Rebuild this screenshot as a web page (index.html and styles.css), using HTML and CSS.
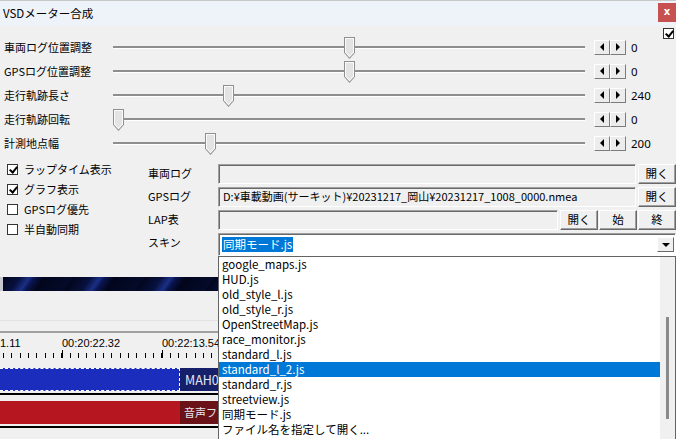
FILE: index.html
```html
<!DOCTYPE html>
<html lang="ja">
<head>
<meta charset="utf-8">
<link rel="stylesheet" href="styles.css">
</head>
<body>
<div class="window">
  <div class="titlebar">
    <span class="title">VSDメーター合成</span>
    <div class="close">x</div>
  </div>
  <div class="client">
    <div class="toprow"><span class="cb small checked"></span></div>

    <div class="sliders">
      <div class="srow">
        <span class="slabel">車両ログ位置調整</span>
        <div class="track"><span class="thumb" style="left:231px"></span></div>
        <div class="spin"><span class="sbtn"><i class="tl"></i></span><span class="sbtn"><i class="tr"></i></span></div>
        <span class="sval">0</span>
      </div>
      <div class="srow">
        <span class="slabel">GPSログ位置調整</span>
        <div class="track"><span class="thumb" style="left:231px"></span></div>
        <div class="spin"><span class="sbtn"><i class="tl"></i></span><span class="sbtn"><i class="tr"></i></span></div>
        <span class="sval">0</span>
      </div>
      <div class="srow">
        <span class="slabel">走行軌跡長さ</span>
        <div class="track"><span class="thumb" style="left:110px"></span></div>
        <div class="spin"><span class="sbtn"><i class="tl"></i></span><span class="sbtn"><i class="tr"></i></span></div>
        <span class="sval">240</span>
      </div>
      <div class="srow">
        <span class="slabel">走行軌跡回転</span>
        <div class="track"><span class="thumb" style="left:0px"></span></div>
        <div class="spin"><span class="sbtn"><i class="tl"></i></span><span class="sbtn"><i class="tr"></i></span></div>
        <span class="sval">0</span>
      </div>
      <div class="srow">
        <span class="slabel">計測地点幅</span>
        <div class="track"><span class="thumb" style="left:92px"></span></div>
        <div class="spin"><span class="sbtn"><i class="tl"></i></span><span class="sbtn"><i class="tr"></i></span></div>
        <span class="sval">200</span>
      </div>
    </div>

    <div class="options">
      <div class="checks">
        <label class="crow"><span class="cb checked"></span><span>ラップタイム表示</span></label>
        <label class="crow"><span class="cb checked"></span><span>グラフ表示</span></label>
        <label class="crow"><span class="cb"></span><span>GPSログ優先</span></label>
        <label class="crow"><span class="cb"></span><span>半自動同期</span></label>
      </div>
      <div class="files">
        <div class="frow">
          <span class="flabel">車両ログ</span>
          <div class="field"></div>
          <span class="btn">開く</span>
        </div>
        <div class="frow">
          <span class="flabel">GPSログ</span>
          <div class="field">D:¥車載動画(サーキット)¥20231217_岡山¥20231217_1008_0000.nmea</div>
          <span class="btn">開く</span>
        </div>
        <div class="frow">
          <span class="flabel">LAP表</span>
          <div class="field"></div>
          <span class="btn">開く</span>
          <span class="btn">始</span>
          <span class="btn">終</span>
        </div>
        <div class="frow skin">
          <span class="flabel">スキン</span>
          <div class="combo">
            <span class="sel">同期モード.js</span>
            <span class="arrow"><i></i></span>
          </div>
        </div>
      </div>
    </div>

    <div class="lower">
      <div class="band"></div>
      <div class="sep1"></div>
      <div class="sep2"></div>
      <div class="timeline">
        <span class="tlabel" style="left:0px">1.11</span>
        <span class="tlabel" style="left:62px">00:20:22.32</span>
        <span class="tlabel" style="left:162px">00:22:13.54</span>
        <div class="ticks"></div>
      </div>
      <div class="trackbar video">
        <div class="clip"></div>
        <div class="clipname">MAH0</div>
        <div class="rest"></div>
      </div>
      <div class="blackline"></div>
      <div class="trackbar audio">
        <div class="clip"></div>
        <div class="clipname">音声フ</div>
        <div class="rest"></div>
      </div>
      <div class="blackline"></div>
    </div>
  </div>

  <div class="dropdown">
    <ul class="items">
      <li>google_maps.js</li>
      <li>HUD.js</li>
      <li>old_style_l.js</li>
      <li>old_style_r.js</li>
      <li>OpenStreetMap.js</li>
      <li>race_monitor.js</li>
      <li>standard_l.js</li>
      <li class="hl">standard_l_2.js</li>
      <li>standard_r.js</li>
      <li>streetview.js</li>
      <li>同期モード.js</li>
      <li>ファイル名を指定して開く...</li>
    </ul>
    <div class="vscroll"><span class="vthumb"></span></div>
  </div>
</div>
</body>
</html>
```

FILE: styles.css
```css
* { box-sizing: border-box; }
html, body { margin: 0; padding: 0; }
body {
  width: 676px;
  height: 439px;
  overflow: hidden;
  background: #f0f0f0;
  font-family: "Noto Sans CJK JP", "Noto Sans", sans-serif;
  font-size: 11px;
  color: #000;
}
.window {
  position: relative;
  width: 676px;
  height: 439px;
  overflow: hidden;
  background: #f0f0f0;
}
.titlebar {
  height: 26px;
  border-top: 1px solid #c8c8c8;
  background: #eef2f9;
  display: flex;
  align-items: flex-start;
  justify-content: space-between;
}
.title {
  padding-left: 3px;
  line-height: 25px;
  font-size: 11.5px;
}
.close {
  width: 18px;
  height: 19px;
  margin-top: 2px;
  background: #c75050;
  color: #fff;
  font-family: "DejaVu Sans", sans-serif;
  font-weight: bold;
  font-size: 10px;
  line-height: 17px;
  text-align: center;
}
.toprow {
  height: 9px;
  display: flex;
  justify-content: flex-end;
  padding-right: 2px;
}
.cb {
  display: inline-block;
  width: 11px;
  height: 11px;
  border: 1px solid #333;
  background: #fff;
  position: relative;
  flex: none;
}
.cb.small { margin-top: 2px; }
.cb.checked::after {
  content: "";
  position: absolute;
  left: 2.5px;
  top: 0px;
  width: 3px;
  height: 6px;
  border-right: 2px solid #000;
  border-bottom: 2px solid #000;
  transform: rotate(40deg);
}
.sliders { display: flex; flex-direction: column; }
.srow {
  height: 24px;
  display: flex;
  align-items: center;
}
.slabel {
  width: 113px;
  padding-left: 4px;
  white-space: nowrap;
}
.track {
  position: relative;
  width: 472px;
  height: 2px;
  background: #8e8e8e;
  box-shadow: 0 1px 0 #ffffff;
}
.thumb {
  position: absolute;
  top: -9px;
  width: 11px;
  height: 22px;
  background: #8f8f8f;
  clip-path: polygon(0 0, 100% 0, 100% 72%, 50% 100%, 0 72%);
}
.thumb::before {
  content: "";
  position: absolute;
  inset: 0;
  background: #fbfbfb;
  clip-path: polygon(1px 1px, 10px 1px, 10px 15.5px, 5.5px 20.5px, 1px 15.5px);
}
.thumb::after {
  content: "";
  position: absolute;
  inset: 0;
  background: #e3e3e3;
  clip-path: polygon(2px 2px, 9px 2px, 9px 15px, 5.5px 19px, 2px 15px);
}
.spin {
  display: flex;
  margin-left: 9px;
}
.sbtn {
  width: 16px;
  height: 15px;
  background: #ececec;
  border: 1px solid;
  border-color: #ffffff #7c7c7c #7c7c7c #ffffff;
  display: flex;
  align-items: center;
  justify-content: center;
}
.sbtn i {
  width: 0;
  height: 0;
  border-top: 4px solid transparent;
  border-bottom: 4px solid transparent;
}
.sbtn i.tl { border-right: 4px solid #000; }
.sbtn i.tr { border-left: 4px solid #000; }
.sval {
  margin-left: 5px;
  font-family: "Noto Sans", sans-serif;
  font-size: 11.5px;
}
.options {
  display: flex;
  height: 101px;
}
.checks {
  width: 148px;
  padding-top: 4px;
  display: flex;
  flex-direction: column;
}
.crow {
  height: 20px;
  display: flex;
  align-items: center;
  padding-left: 7px;
  gap: 6px;
  white-space: nowrap;
}
.files {
  flex: 1;
  padding-top: 9px;
  display: flex;
  flex-direction: column;
  gap: 3px;
}
.frow {
  height: 20px;
  display: flex;
  align-items: stretch;
}
.flabel {
  width: 70px;
  line-height: 19px;
  white-space: nowrap;
}
.field {
  flex: 1;
  background: #f0f0f0;
  border: 1px solid;
  border-color: #a0a0a0 #ffffff #ffffff #a0a0a0;
  box-shadow: inset 1px 1px 0 #696969;
  padding-left: 4px;
  line-height: 17px;
  white-space: nowrap;
  overflow: hidden;
  margin-right: 1px;
}
.btn {
  width: 38px;
  background: #f0f0f0;
  border: 1px solid;
  border-color: #ffffff #696969 #696969 #ffffff;
  box-shadow: inset -1px -1px 0 #a0a0a0;
  text-align: center;
  line-height: 17px;
  margin-left: 1px;
  font-size: 11.5px;
}
.frow.skin { height: 23px; }
.combo {
  flex: 1;
  background: #fff;
  border: 1px solid;
  border-color: #a0a0a0 #ffffff #ffffff #a0a0a0;
  box-shadow: inset 1px 1px 0 #696969;
  display: flex;
  align-items: center;
  justify-content: space-between;
  padding-left: 3px;
  padding-right: 1px;
}
.sel {
  background: #0078d7;
  color: #fff;
  line-height: 15px;
  padding: 0 1px;
  font-size: 11.5px;
}
.arrow {
  width: 17px;
  height: 15px;
  background: #f0f0f0;
  border: 1px solid;
  border-color: #ffffff #696969 #696969 #ffffff;
  display: flex;
  align-items: center;
  justify-content: center;
}
.arrow i {
  width: 0;
  height: 0;
  border-left: 4px solid transparent;
  border-right: 4px solid transparent;
  border-top: 4px solid #000;
}
.lower {
  padding-top: 21px;
  display: flex;
  flex-direction: column;
}
.band {
  height: 14px;
  margin-left: 3px;
  background:
    repeating-linear-gradient(125deg,
      #02061c 0px, #07113e 14px, #1a2f86 22px, #0a1550 26px, #02061c 34px, #040a2a 58px);
  box-shadow: -3px 0 0 #c8c8d0;
}
.sep1 {
  height: 1px;
  margin-top: 29px;
  background: #e2e2e2;
}
.sep2 {
  height: 2px;
  margin-top: 10px;
  background: #a0a0a0;
}
.timeline {
  position: relative;
  height: 35px;
}
.tlabel {
  position: absolute;
  top: 3px;
  font-family: "Liberation Sans", sans-serif;
  font-size: 11px;
  line-height: 14px;
}
.ticks {
  position: absolute;
  left: 0;
  right: 0;
  top: 17px;
  height: 8px;
  background:
    linear-gradient(#000, #000) 62px 0 / 1px 8px no-repeat,
    linear-gradient(#000, #000) 162px 0 / 1px 8px no-repeat,
    repeating-linear-gradient(90deg, #000 0 1px, transparent 1px 8.333px) 3.3px 3px / 100% 5px no-repeat;
}
.trackbar {
  height: 23px;
  display: flex;
}
.trackbar.video { background: #1a2dbd; }
.trackbar.audio { background: #b6161f; margin-top: 6px; }
.video .clip {
  width: 180px;
  border: 1px dashed #ffffff;
  border-left: none;
}
.audio .clip { width: 180px; }
.clipname {
  width: 38px;
  flex: none;
  color: #e6e6f0;
  padding-left: 4px;
  line-height: 23px;
  white-space: nowrap;
  overflow: hidden;
  font-size: 11px;
}
.video .clipname { font-size: 12.5px; padding-left: 5px; }
.rest { flex: 1; }
.video .clipname, .video .rest { background: #16206a; }
.audio .clipname, .audio .rest { background: #6b1218; }
.blackline {
  height: 2px;
  margin-top: 2px;
  background: #000;
}
.dropdown {
  position: absolute;
  left: 218px;
  top: 256px;
  width: 458px;
  height: 190px;
  background: #fff;
  border: 1px solid #646464;
  display: flex;
}
.items {
  list-style: none;
  margin: 0;
  padding: 0;
  flex: 1;
  font-size: 11.5px;
}
.items li {
  height: 15px;
  line-height: 15px;
  padding-left: 3px;
  white-space: nowrap;
}
.items li.hl {
  background: #0078d7;
  color: #fff;
}
.vscroll {
  width: 15px;
  background: #f0f0f0;
  position: relative;
}
.vthumb {
  position: absolute;
  left: 6px;
  top: 60px;
  width: 3px;
  height: 102px;
  background: #8a8a8a;
}
```
